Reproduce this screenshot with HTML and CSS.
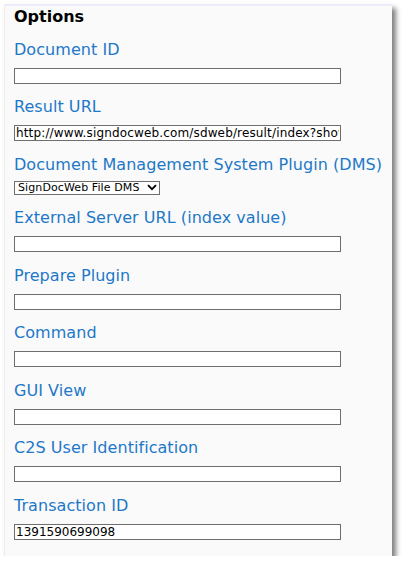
FILE: index.html
```html
<!DOCTYPE html>
<html>
<head>
<meta charset="utf-8">
<link rel="stylesheet" href="styles.css">
</head>
<body>
<div class="panel">
  <div class="title">Options</div>
  <div class="field">
    <div class="label">Document ID</div>
    <input class="box" type="text" value="">
  </div>
  <div class="field">
    <div class="label">Result URL</div>
    <input class="box url" type="text" value="http://www.signdocweb.com/sdweb/result/index?show=1">
  </div>
  <div class="field">
    <div class="label">Document Management System Plugin (DMS)</div>
    <span class="selwrap">
      <select class="sel"><option>SignDocWeb File DMS</option></select>
      <svg class="chev" width="10" height="7" viewBox="0 0 10 7"><path d="M1 1.2 L5 5.2 L9 1.2" fill="none" stroke="#000" stroke-width="1.8"/></svg>
    </span>
  </div>
  <div class="field">
    <div class="label">External Server URL (index value)</div>
    <input class="box" type="text" value="">
  </div>
  <div class="field">
    <div class="label">Prepare Plugin</div>
    <input class="box" type="text" value="">
  </div>
  <div class="field">
    <div class="label">Command</div>
    <input class="box" type="text" value="">
  </div>
  <div class="field">
    <div class="label">GUI View</div>
    <input class="box" type="text" value="">
  </div>
  <div class="field">
    <div class="label">C2S User Identification</div>
    <input class="box" type="text" value="">
  </div>
  <div class="field">
    <div class="label">Transaction ID</div>
    <input class="box" type="text" value="1391590699098">
  </div>
</div>
</body>
</html>
```
FILE: styles.css
```css
html, body {
  margin: 0;
  padding: 0;
  background: #ffffff;
}
body {
  font-family: "DejaVu Sans", Verdana, sans-serif;
}
.panel {
  box-sizing: border-box;
  margin: 4px 0 0 4px;
  width: 388px;
  height: 552px;
  background: #fafafa;
  border-top: 2px solid #ececfa;
  border-left: 1px solid #ededed;
  padding: 0.5px 0 0 9px;
  box-shadow: 4px 4px 5px rgba(0, 0, 0, 0.5);
}
.title {
  font-size: 16px;
  font-weight: bold;
  line-height: 20px;
  color: #000;
  margin-bottom: 13px;
}
.field {
  display: flex;
  flex-direction: column;
  align-items: flex-start;
  margin-bottom: 13.5px;
}
.label {
  font-size: 16px;
  line-height: 20px;
  color: #1e78c8;
  letter-spacing: 0.05px;
  white-space: nowrap;
}
.box {
  box-sizing: border-box;
  margin: 8px 0 0 0;
  width: 327px;
  height: 16px;
  border: 1px solid #6e6e6e;
  background: #fff;
  padding: 0 1px;
  font-family: "DejaVu Sans", Verdana, sans-serif;
  font-size: 12px;
  color: #000;
  outline: none;
}
.url {
  letter-spacing: 0.15px;
}
.selwrap {
  position: relative;
  display: inline-block;
  margin-top: 6px;
  height: 14px;
}
.sel {
  box-sizing: border-box;
  appearance: none;
  -webkit-appearance: none;
  width: 146px;
  height: 14px;
  border: 1px solid #6e6e6e;
  border-radius: 0;
  background: #fff;
  padding: 0 0 0 3px;
  margin: 0;
  font-family: "DejaVu Sans", Verdana, sans-serif;
  font-size: 11px;
  letter-spacing: 0.1px;
  line-height: 12px;
  color: #000;
  display: block;
}
.chev {
  position: absolute;
  right: 3px;
  top: 3px;
}
```
